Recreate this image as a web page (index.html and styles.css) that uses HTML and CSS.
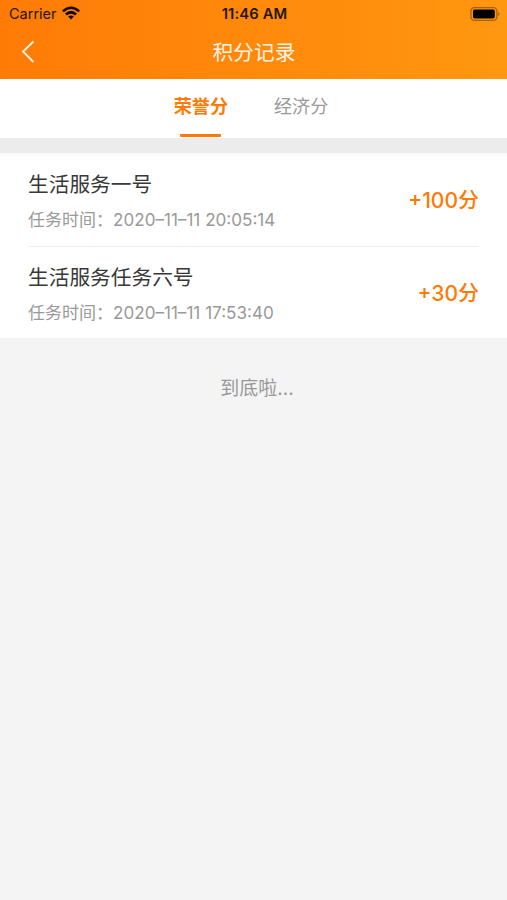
FILE: index.html
```html
<!DOCTYPE html>
<html lang="zh-CN">
<head>
<meta charset="utf-8">
<title>积分记录</title>
<link rel="stylesheet" href="styles.css">
</head>
<body>
<header class="header">
  <div class="status">
    <div class="carrier"><span class="carrier-name">Carrier</span>
      <svg class="wifi" viewBox="0 0 18 14"><path d="M0 4.4Q9-3.6 18 4.4L16.2 6.2Q9-.4 1.8 6.2ZM3 7.5Q9 2.2 15 7.5L13.1 9.4Q9 5.9 4.9 9.4ZM6.1 10.6Q9 8.2 11.9 10.6L9 13.5Z"/></svg>
    </div>
    <time class="clock">11:46 AM</time>
    <svg class="battery" viewBox="0 0 30 14"><rect class="shell" x=".9" y=".7" width="26" height="12.6" rx="3.6"/><rect x="3" y="2.6" width="21.8" height="8.8" rx="1.6"/><path class="cap" d="M28.2 4.7Q30.8 7 28.2 9.3Z"/></svg>
  </div>
  <nav class="navbar">
    <svg class="back" viewBox="0 0 14 24"><path d="M12.5 1.5 2 11.5 12.5 22"/></svg>
    <h1 class="title">积分记录</h1>
    <span></span>
  </nav>
</header>
<div class="tabs"><a class="tab active">荣誉分</a><a class="tab">经济分</a></div>
<main class="list">
  <div class="row">
    <div><h2 class="name">生活服务一号</h2><p class="time"><span>任务时间：</span><span class="date">2020–11–11 20:05:14</span></p></div>
    <div class="points"><span>+100</span><span class="unit">分</span></div>
  </div>
  <div class="row">
    <div><h2 class="name">生活服务任务六号</h2><p class="time"><span>任务时间：</span><span class="date">2020–11–11 17:53:40</span></p></div>
    <div class="points"><span>+30</span><span class="unit">分</span></div>
  </div>
</main>
<p class="end">到底啦...</p>
</body>
</html>
```
FILE: styles.css
```css
* { box-sizing: border-box; }
body { margin: 0; min-height: 900px; background: #f4f4f4; font-family: Inter, "Noto Sans CJK SC", sans-serif; color: #383838; }
h1, h2, p { margin: 0; font-weight: 400; }
.header { height: 79px; background: linear-gradient(90deg, #ff7b06, #ff9710); }
.status { height: 27px; padding: 0 7px 0 9px; display: grid; grid-template-columns: 1fr auto 1fr; align-items: center; color: #24160a; }
.carrier { display: flex; align-items: center; gap: 5px; font-size: 14.5px; }
.wifi { width: 18px; height: 14px; margin-bottom: 1px; fill: #100900; }
.clock { font-size: 14.8px; font-weight: 600; letter-spacing: .1px; }
.battery { width: 30px; height: 14px; justify-self: end; }
.shell { fill: none; stroke: #a7600c; stroke-width: 1.3; }
.cap { fill: #a7600c; }
.navbar { height: 52px; padding: 0 21px; display: grid; grid-template-columns: 1fr auto 1fr; align-items: center; }
.back { width: 14px; height: 24px; margin-bottom: 3px; fill: none; stroke: #fff3e5; stroke-width: 1.8; }
.title { padding: 0 0 1px 1px; color: #fff3e5; font-size: 20.7px; line-height: 50px; }
.tabs { height: 59px; padding-right: 5px; background: #fff; display: flex; justify-content: center; gap: 46px; }
.tab { height: 59px; padding-top: 12px; font-size: 18.1px; line-height: 30px; color: #999; display: flex; flex-direction: column; align-items: center; }
.active { color: #ff7a05; font-weight: 700; }
.active::after { content: ""; width: 41px; height: 2.5px; margin-top: 13px; border-radius: 1px; background: #ff7a05; }
.list { margin-top: 15px; padding: 0 28px; background: linear-gradient(#f9f9f9, #fff 5px); box-shadow: 0 -15px 0 #ececec; }
.row { height: 93px; padding-top: 5px; display: flex; justify-content: space-between; align-items: center; }
.row + .row { height: 92px; border-top: 1px solid #f0f0f0; }
.name { font-size: 20.7px; line-height: 34px; }
.time { margin-top: 2px; font-size: 17px; line-height: 32px; color: #999; display: flex; }
.date { font-size: 17.1px; }
.points { padding-bottom: 3px; color: #ff7a05; font-size: 21px; line-height: 32px; font-weight: 500; display: flex; align-items: center; }
.unit { margin-top: -2px; }
.end { margin-top: 35px; padding-left: 7px; text-align: center; color: #999; font-size: 19px; line-height: 32px; }
```
